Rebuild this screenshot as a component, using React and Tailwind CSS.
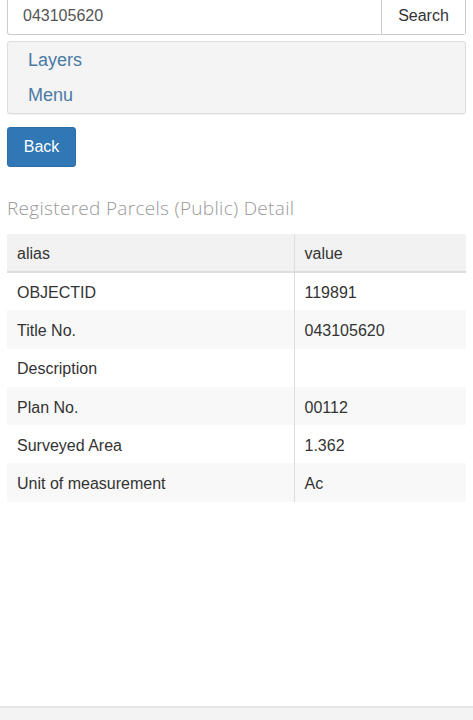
import React from 'react';

const rows = [
  { alias: 'OBJECTID', value: '119891' },
  { alias: 'Title No.', value: '043105620' },
  { alias: 'Description', value: '' },
  { alias: 'Plan No.', value: '00112' },
  { alias: 'Surveyed Area', value: '1.362' },
  { alias: 'Unit of measurement', value: 'Ac' },
];

const App = () => {
  return (
    <div className="w-[473px] h-[720px] bg-white flex flex-col font-['Liberation_Sans',Arial,sans-serif] text-[#333] overflow-hidden">
      <div className="px-[7px]">
        {/* search bar */}
        <div className="flex h-[35px] border-x border-b border-[#ccc] rounded-b-[3px]">
          <div className="flex-1 flex items-center pl-[15px] pb-[2px] text-[16px] text-[#555]">043105620</div>
          <button className="w-[84px] pb-[2px] border-l border-[#ccc] text-[16px] text-[#333] bg-white">Search</button>
        </div>

        {/* layers / menu panel */}
        <div className="mt-[6px] h-[73px] bg-[#f4f4f4] border border-[#ddd] rounded-[3px] shadow-[0_1px_1px_rgba(0,0,0,0.05)] flex flex-col justify-center pl-[20px] gap-[12px] text-[18px] text-[#4a7aa5] leading-[23px]">
          <span>Layers</span>
          <span>Menu</span>
        </div>

        <button className="mt-[13px] w-[69px] h-[40px] bg-[#2f77b5] text-white text-[16px] rounded-[3px] border border-[#2e6da4]">Back</button>

        <h3 className="mt-[28px] text-[19px] font-light tracking-[0.3px] text-[#999] font-['Open_Sans',sans-serif] leading-[26px]">
          Registered Parcels (Public) Detail
        </h3>

        <table className="mt-[13px] w-full border-collapse text-[16px]">
          <thead>
            <tr className="bg-[#f2f2f2] h-[38px] border-b-2 border-[#ddd]">
              <th className="w-[287px] text-left font-normal pl-[10px] pt-[2px] border-r border-[#ddd]">alias</th>
              <th className="text-left font-normal pl-[10px] pt-[2px]">value</th>
            </tr>
          </thead>
          <tbody>
            {rows.map((r, i) => (
              <tr key={r.alias} className={`h-[38.3px] ${i % 2 === 1 ? 'bg-[#f8f8f8]' : 'bg-white'}`}>
                <td className="pl-[10px] pt-[3px] border-r border-[#ddd]">{r.alias}</td>
                <td className="pl-[10px] pt-[3px]">{r.value}</td>
              </tr>
            ))}
          </tbody>
        </table>
      </div>

      <div className="flex-1" />
      {/* bottom bar */}
      <div className="h-[14px] border-t-2 border-[#e6e6e6] bg-[#f3f3f3]" />
    </div>
  );
};

export default App;
